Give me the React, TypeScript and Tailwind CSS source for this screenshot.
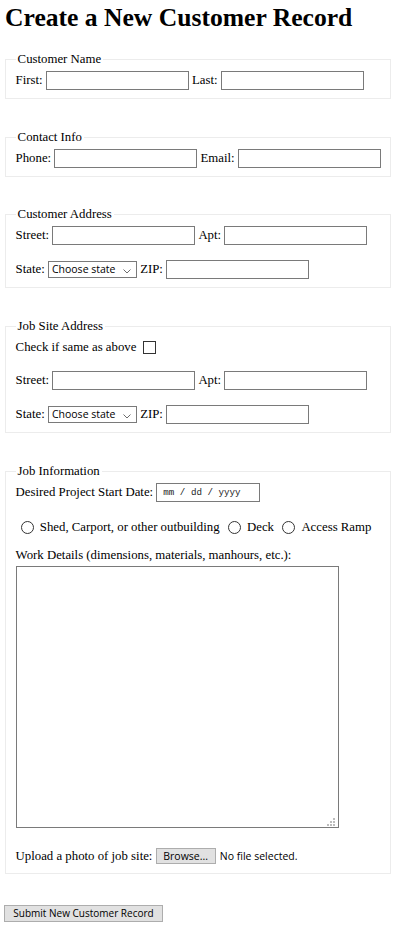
import React from "react";

function TextBox() {
  return (
    <input
      type="text"
      className="w-[143px] h-[19px] shrink-0 border border-[#7a7a7a] bg-white px-[2px] outline-none"
    />
  );
}

function StateSelect() {
  return (
    <div className="relative w-[89px] h-[17px] shrink-0">
      <select className="appearance-none w-[89px] h-[17px] border border-[#7a7a7a] bg-white pl-[3px] py-0 font-['Open_Sans',sans-serif] text-[10.5px] leading-[15px] text-black outline-none">
        <option>Choose state</option>
      </select>
      <svg
        className="absolute right-[6px] top-[8px] pointer-events-none"
        width="8"
        height="5"
        viewBox="0 0 8 5"
      >
        <path d="M0.5 0.5 L4 4 L7.5 0.5" fill="none" stroke="#6d6d6d" strokeWidth="1" />
      </svg>
    </div>
  );
}

function Legend({ children }: { children: React.ReactNode }) {
  return <legend className="px-[2px] leading-[15px]">{children}</legend>;
}

const fs =
  "ml-[5px] w-[386px] border border-[#ececec] px-[9.6px] pt-[4px] pb-[8px] min-w-0";

function Radio() {
  return (
    <span className="ml-[5px] mr-[3px] w-[13px] h-[13px] shrink-0 rounded-full border border-[#333333] bg-white" />
  );
}

export default function App() {
  return (
    <div className="w-[420px] min-h-[928px] bg-white text-black font-['Liberation_Serif','Times_New_Roman',serif] text-[12.8px] leading-[15px]">
      <h1 className="pt-[4px] pl-[5px] text-[25.6px] leading-[28px] font-bold">
        Create a New Customer Record
      </h1>
      <form className="flex flex-col">
        <fieldset className={`mt-[20px] ${fs}`}>
          <Legend>Customer Name</Legend>
          <div className="flex items-center h-[19px] gap-[3.2px]">
            <span>First:</span>
            <TextBox />
            <span>Last:</span>
            <TextBox />
          </div>
        </fieldset>

        <fieldset className={`mt-[31px] ${fs}`}>
          <Legend>Contact Info</Legend>
          <div className="flex items-center h-[19px] gap-[3.2px]">
            <span>Phone:</span>
            <TextBox />
            <span>Email:</span>
            <TextBox />
          </div>
        </fieldset>

        <fieldset className={`mt-[30px] ${fs}`}>
          <Legend>Customer Address</Legend>
          <div className="flex items-center h-[19px] gap-[3.2px]">
            <span>Street:</span>
            <TextBox />
            <span>Apt:</span>
            <TextBox />
          </div>
          <div className="mt-[15px] flex items-center h-[19px] gap-[3.2px]">
            <span>State:</span>
            <StateSelect />
            <span>ZIP:</span>
            <TextBox />
          </div>
        </fieldset>

        <fieldset className={`mt-[31px] ${fs}`}>
          <Legend>Job Site Address</Legend>
          <div className="flex items-center h-[19px] gap-[3.2px]">
            <span>Check if same as above</span>
            <span className="ml-[3px] w-[13px] h-[13px] border border-[#333333] bg-white" />
          </div>
          <div className="mt-[14px] flex items-center h-[19px] gap-[3.2px]">
            <span>Street:</span>
            <TextBox />
            <span>Apt:</span>
            <TextBox />
          </div>
          <div className="mt-[15px] flex items-center h-[19px] gap-[3.2px]">
            <span>State:</span>
            <StateSelect />
            <span>ZIP:</span>
            <TextBox />
          </div>
        </fieldset>

        <fieldset className={`mt-[31px] ${fs}`}>
          <Legend>Job Information</Legend>
          <div className="flex items-center h-[19px] gap-[3.2px]">
            <span>Desired Project Start Date:</span>
            <div className="w-[104px] h-[19px] shrink-0 border border-[#7a7a7a] bg-white pl-[6px] flex items-center font-['Liberation_Mono',monospace] text-[9.2px] text-[#222222]">
              mm / dd / yyyy
            </div>
          </div>
          <div className="mt-[18px] flex items-center h-[15px] gap-[3.2px]">
            <Radio />
            <span>Shed, Carport, or other outbuilding</span>
            <Radio />
            <span>Deck</span>
            <Radio />
            <span>Access Ramp</span>
          </div>
          <div className="mt-[13px] h-[15px]">
            Work Details (dimensions, materials, manhours, etc.):
          </div>
          <div className="relative mt-[3px] w-[323px] h-[262px]">
            <textarea className="block w-[323px] h-[262px] resize-none border border-[#7a7a7a] bg-white outline-none" />
            <svg
              className="absolute left-[311px] top-[252px] pointer-events-none"
              width="8"
              height="8"
              viewBox="0 0 8 8"
            >
              <rect x="6" y="0" width="2" height="2" fill="#bdbdbd" />
              <rect x="3" y="3" width="2" height="2" fill="#bdbdbd" />
              <rect x="6" y="3" width="2" height="2" fill="#bdbdbd" />
              <rect x="0" y="6" width="2" height="2" fill="#bdbdbd" />
              <rect x="3" y="6" width="2" height="2" fill="#bdbdbd" />
              <rect x="6" y="6" width="2" height="2" fill="#bdbdbd" />
            </svg>
          </div>
          <div className="mt-[19px] flex items-center h-[18px] gap-[3.2px]">
            <span>Upload a photo of job site:</span>
            <button
              type="button"
              className="w-[60px] h-[16px] shrink-0 border border-[#adadad] bg-[#e1e1e1] font-['Open_Sans',sans-serif] text-[10.5px] leading-[14px] text-black"
            >
              Browse...
            </button>
            <span className="ml-[1px] font-['Open_Sans',sans-serif] text-[10.5px] text-black">
              No file selected.
            </span>
          </div>
        </fieldset>

        <div className="mt-[31px] ml-[4px]">
          <button
            type="submit"
            className="w-[159px] h-[17px] border border-[#adadad] bg-[#e1e1e1] font-['Open_Sans',sans-serif] text-[10px] leading-[15px] text-black"
          >
            Submit New Customer Record
          </button>
        </div>
      </form>
    </div>
  );
}
